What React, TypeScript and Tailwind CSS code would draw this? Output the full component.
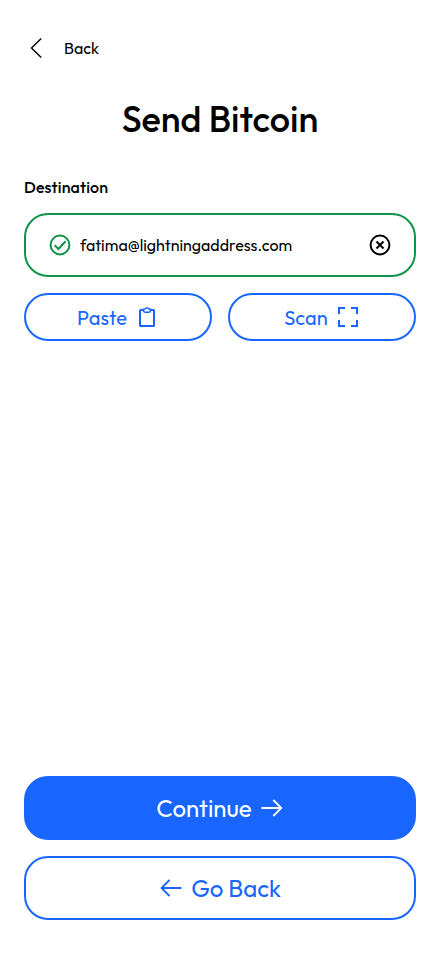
import type { ReactNode } from "react";
import clsx from "clsx";

function Icon({ children, width = 2 }: { children: ReactNode; width?: number }) {
  return (
    <svg
      aria-hidden
      className="h-6 w-6 shrink-0"
      viewBox="0 0 24 24"
      fill="none"
      stroke="currentColor"
      strokeWidth={width}
    >
      {children}
    </svg>
  );
}

function Button({ className, children }: { className?: string; children: ReactNode }) {
  return (
    <button
      type="button"
      className={clsx(
        "flex w-full items-center justify-center gap-2 border-2 border-[#1866ff]",
        className,
      )}
    >
      {children}
    </button>
  );
}

export default function App() {
  return (
    <main className="flex h-[956px] flex-col bg-white px-6 pt-9 pb-9 font-['Outfit','Lato',sans-serif] text-black">
      <button type="button" className="flex h-6 items-center gap-4 self-start">
        <Icon width={1.4}>
          <path d="M17.2 2.4 7.5 12l9.7 9.6" />
        </Icon>
        <span className="text-base leading-6">Back</span>
      </button>

      <h1 className="mt-[35px] text-center text-4xl leading-12 font-medium whitespace-nowrap">
        Send Bitcoin
      </h1>

      <label className="mt-8 text-base leading-6 font-medium tracking-[0.12px]">Destination</label>
      <div className="mt-3.5 flex h-16 items-center rounded-3xl border-2 border-[#0e9347] px-[22px]">
        <span className="text-[#0e9347]">
          <Icon>
            <circle cx="12" cy="12" r="9.4" />
            <path d="m6.6 12.1 3.8 3.9 7.2-7.8" />
          </Icon>
        </span>
        <span className="ml-2 flex-1 text-base leading-6">fatima@lightningaddress.com</span>
        <Icon>
          <circle cx="12" cy="12" r="9.4" />
          <path d="m8.5 8.5 7 7M15.5 8.5l-7 7" />
        </Icon>
      </div>

      <div className="mt-4 flex gap-4 text-xl leading-6 text-[#1866ff]">
        <Button className="h-12 rounded-full">
          <span className="pt-px tracking-[0.1px]">Paste</span>
          <Icon>
            <path d="M8 5H5.5a.5.5 0 0 0-.5.5v15a.5.5 0 0 0 .5.5h13a.5.5 0 0 0 .5-.5v-15a.5.5 0 0 0-.5-.5H16" />
            <path
              d="M8.4 4.2v1c0 1.2.9 2 2 2h3.200c1.100 0 2-.8 2-2v-1h-1.300c-.9-1.700-3.700-1.700-4.600 0Z"
              strokeWidth="1.5"
            />
          </Icon>
        </Button>
        <Button className="h-12 rounded-full">
          <span className="pt-px tracking-[0.1px]">Scan</span>
          <Icon>
            <path d="M3 9V3h6M15 3h6v6M21 15v6h-6M9 21H3v-6" />
          </Icon>
        </Button>
      </div>

      <div className="mt-auto flex flex-col gap-4 text-2xl leading-8">
        <Button className="h-16 rounded-3xl bg-[#1866ff] text-white">
          <span>Continue</span>
          <Icon width={1.8}>
            <path d="M1.5 12h20M13.300 4l8 8-8 8" />
          </Icon>
        </Button>
        <Button className="h-16 rounded-3xl text-[#1866ff]">
          <Icon width={1.8}>
            <path d="M22.5 12h-20M10.500 4l-8 8 8 8" />
          </Icon>
          <span>Go Back</span>
        </Button>
      </div>
    </main>
  );
}
